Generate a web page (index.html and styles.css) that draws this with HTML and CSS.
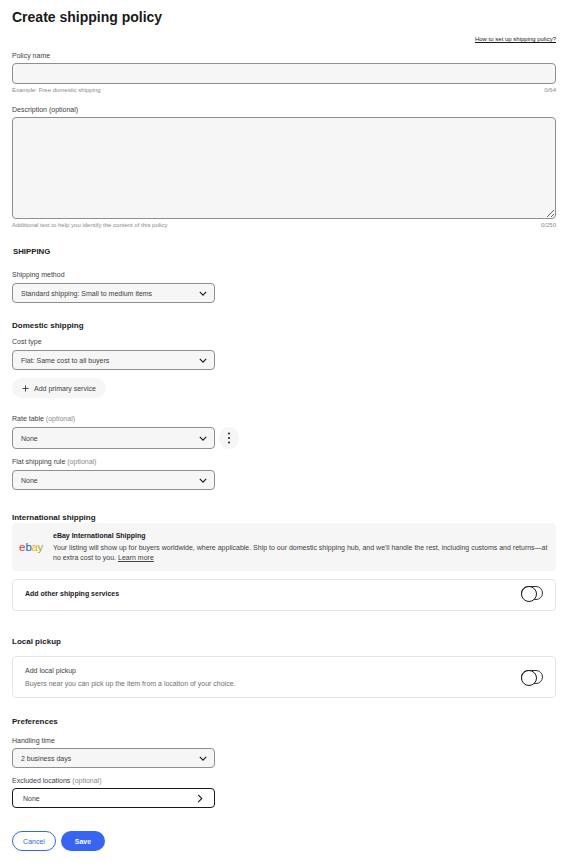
FILE: index.html
```html
<!DOCTYPE html>
<html lang="en">
<head>
    <meta charset="UTF-8">
    <meta name="viewport" content="width=device-width, initial-scale=1.0">
    <title>Create shipping policy</title>
    <link rel="stylesheet" href="styles.css">
</head>
<body>
    <div class="page">
        <h1>Create shipping policy</h1>
        <div class="help-row"><a href="#" class="help-link">How to set up shipping policy?</a></div>

        <label class="label label-first">Policy name</label>
        <input class="field input" type="text">
        <div class="hint"><span>Example: Free domestic shipping</span><span class="count">0/64</span></div>

        <label class="label label-desc">Description (optional)</label>
        <textarea class="field textarea"></textarea>
        <div class="hint"><span>Additional text to help you identify the content of this policy</span><span class="count">0/250</span></div>

        <h2 class="section-caps">SHIPPING</h2>
        <label class="label label-method">Shipping method</label>
        <div class="select">
            <span>Standard shipping: Small to medium items</span>
            <svg class="chevron" viewBox="0 0 10 6"><path d="M1 1l4 4 4-4"/></svg>
        </div>

        <h3 class="domestic">Domestic shipping</h3>
        <label class="label label-cost">Cost type</label>
        <div class="select">
            <span>Flat: Same cost to all buyers</span>
            <svg class="chevron" viewBox="0 0 10 6"><path d="M1 1l4 4 4-4"/></svg>
        </div>
        <button class="pill-add">
            <svg class="plus" viewBox="0 0 8 8"><path d="M4 .5v7M.5 4h7"/></svg>
            Add primary service
        </button>

        <label class="label label-rate">Rate table <span class="optional">(optional)</span></label>
        <div class="rate-row">
            <div class="select select-tall">
                <span>None</span>
                <svg class="chevron" viewBox="0 0 10 6"><path d="M1 1l4 4 4-4"/></svg>
            </div>
            <button class="more">
                <svg viewBox="0 0 4 12"><circle cx="2" cy="1.5" r="1"/><circle cx="2" cy="6" r="1"/><circle cx="2" cy="10.5" r="1"/></svg>
            </button>
        </div>
        <label class="label label-flat">Flat shipping rule <span class="optional">(optional)</span></label>
        <div class="select">
            <span>None</span>
            <svg class="chevron" viewBox="0 0 10 6"><path d="M1 1l4 4 4-4"/></svg>
        </div>

        <h3 class="international">International shipping</h3>
        <div class="notice">
            <svg class="ebay-logo" viewBox="0 0 26 12">
                <text x="0" y="10" class="logo-e">e</text>
                <text x="6.4" y="10" class="logo-b">b</text>
                <text x="12.6" y="10" class="logo-a">a</text>
                <text x="18.4" y="10" class="logo-y">y</text>
            </svg>
            <div>
                <div class="notice-title">eBay International Shipping</div>
                <p class="notice-text">Your listing will show up for buyers worldwide, where applicable. Ship to our domestic shipping hub, and we'll handle the rest, including customs and returns—at no extra cost to you. <a href="#">Learn more</a></p>
            </div>
        </div>
        <div class="card card-other">
            <div class="card-strong">Add other shipping services</div>
            <div class="toggle"></div>
        </div>

        <h3 class="local">Local pickup</h3>
        <div class="card card-local">
            <div>
                <div class="card-title">Add local pickup</div>
                <div class="card-sub">Buyers near you can pick up the item from a location of your choice.</div>
            </div>
            <div class="toggle"></div>
        </div>

        <h3 class="prefs">Preferences</h3>
        <label class="label label-handling">Handling time</label>
        <div class="select">
            <span>2 business days</span>
            <svg class="chevron" viewBox="0 0 10 6"><path d="M1 1l4 4 4-4"/></svg>
        </div>
        <label class="label label-excluded">Excluded locations <span class="optional">(optional)</span></label>
        <div class="select select-link">
            <span>None</span>
            <svg class="arrow" viewBox="0 0 6 10"><path d="M1 1l4 4-4 4"/></svg>
        </div>

        <div class="actions">
            <button class="btn btn-cancel">Cancel</button>
            <button class="btn btn-save">Save</button>
        </div>
    </div>
</body>
</html>
```

FILE: styles.css
```css
* {
    box-sizing: border-box;
}
body {
    margin: 0;
    background: #fff;
    color: #191919;
    font-family: "Liberation Sans", Arial, sans-serif;
}
.page {
    width: 569px;
    height: 863px;
    padding: 10px 13px 0 12px;
    overflow: hidden;
}
h1 {
    margin: 0;
    height: 15px;
    font-size: 14px;
    line-height: 15px;
    font-weight: 700;
}
h2, h3 {
    margin: 0;
    font-size: 8px;
    line-height: 10px;
    font-weight: 700;
}
.help-row {
    display: flex;
    justify-content: flex-end;
    height: 10px;
    margin-top: 10px;
}
.help-link {
    font-size: 6px;
    line-height: 9px;
    color: #191919;
    text-decoration: underline;
}
.label {
    display: block;
    font-size: 7px;
    line-height: 9px;
    color: #41413f;
}
.optional {
    color: #8a8a8a;
}
.label-first { margin-top: 6px; margin-bottom: 3px; }
.label-desc { margin-top: 11px; margin-bottom: 3px; }
.label-method { margin-top: 13px; margin-bottom: 4px; }
.label-cost { margin-top: 6px; margin-bottom: 4px; }
.label-rate { margin-top: 16px; margin-bottom: 4px; }
.label-flat { margin-top: 8px; margin-bottom: 4px; }
.label-handling { margin-top: 9px; margin-bottom: 3px; }
.label-excluded { margin-top: 8px; margin-bottom: 3px; }
.field {
    display: block;
    width: 100%;
    background: #f6f6f6;
    border: 1px solid #8f8f8f;
    border-radius: 4px;
    outline: none;
}
.input {
    height: 21px;
}
.textarea {
    height: 102px;
    resize: vertical;
}
.hint {
    display: flex;
    justify-content: space-between;
    margin-top: 3px;
    font-size: 6px;
    line-height: 7px;
    color: #8a8a8a;
}
.section-caps {
    margin-top: 18px;
    padding-left: 1px;
    font-size: 7.8px;
}
.select {
    display: flex;
    align-items: center;
    justify-content: space-between;
    width: 203px;
    height: 20px;
    padding: 0 7px 0 8px;
    background: #f6f6f6;
    border: 1px solid #8f8f8f;
    border-radius: 4px;
    font-size: 7px;
    color: #41413f;
}
.select-tall {
    height: 22px;
}
.chevron {
    width: 8px;
    height: 5px;
    fill: none;
    stroke: #191919;
    stroke-width: 1.4;
}
.domestic { margin-top: 18px; }
.pill-add {
    display: flex;
    align-items: center;
    gap: 5px;
    width: 94px;
    height: 20px;
    margin-top: 8px;
    padding: 0 0 0 10px;
    background: #f6f6f6;
    border: 0;
    border-radius: 10px;
    font-family: inherit;
    font-size: 7px;
    color: #41413f;
}
.plus {
    width: 7px;
    height: 7px;
    fill: none;
    stroke: #333;
    stroke-width: 1;
}
.rate-row {
    display: flex;
    align-items: center;
    gap: 4px;
}
.more {
    display: flex;
    align-items: center;
    justify-content: center;
    width: 20px;
    height: 22px;
    padding: 0;
    background: #f6f6f6;
    border: 0;
    border-radius: 50%;
}
.more svg {
    width: 4px;
    height: 12px;
    fill: #191919;
}
.international { margin-top: 23px; }
.notice {
    display: flex;
    align-items: flex-start;
    gap: 8px;
    height: 48px;
    padding: 9px 4px 0 7px;
    background: #f6f6f6;
    border-radius: 4px;
}
.ebay-logo {
    flex: none;
    width: 26px;
    height: 12px;
    margin-top: 9px;
    font-size: 11.5px;
    font-weight: 400;
    font-family: "Liberation Sans", Arial, sans-serif;
}
.logo-e { fill: #e53238; }
.logo-b { fill: #0064d2; }
.logo-a { fill: #f5af02; }
.logo-y { fill: #86b817; }
.notice-title {
    font-size: 7px;
    line-height: 8px;
    font-weight: 700;
}
.notice-text {
    margin: 3px 0 0;
    font-size: 7px;
    line-height: 10px;
    color: #41413f;
}
.notice-text a {
    color: #41413f;
}
.card {
    display: flex;
    align-items: center;
    justify-content: space-between;
    padding: 0 12px;
    background: #fff;
    border: 1px solid #e5e5e5;
    border-radius: 4px;
}
.card-other {
    height: 32px;
    margin-top: 8px;
    padding-bottom: 4px;
}
.card-local {
    height: 42px;
    margin-top: 9px;
}
.card-strong {
    font-size: 7px;
    font-weight: 700;
}
.card-title {
    font-size: 7px;
    line-height: 9px;
    color: #41413f;
}
.card-sub {
    margin-top: 4px;
    font-size: 7px;
    line-height: 9px;
    color: #707070;
}
.toggle {
    position: relative;
    width: 22px;
    height: 14px;
    border: 1px solid #333;
    border-radius: 7px;
}
.toggle::before {
    content: '';
    position: absolute;
    top: -1px;
    left: -1px;
    width: 14px;
    height: 14px;
    background: #fff;
    border: 1px solid #191919;
    border-radius: 50%;
}
.local { margin-top: 26px; }
.prefs { margin-top: 19px; }
.select-link {
    padding: 0 11px 0 10px;
    background: #fff;
    border-color: #191919;
}
.arrow {
    width: 6px;
    height: 9px;
    fill: none;
    stroke: #191919;
    stroke-width: 1.2;
}
.actions {
    display: flex;
    gap: 5px;
    margin-top: 23px;
}
.btn {
    width: 44px;
    height: 20px;
    padding: 0;
    border-radius: 10px;
    font-family: inherit;
    font-size: 7px;
}
.btn-cancel {
    background: #fff;
    border: 1px solid #3665f3;
    color: #3665f3;
}
.btn-save {
    background: #3665f3;
    border: 0;
    color: #fff;
    font-weight: 700;
}
```
